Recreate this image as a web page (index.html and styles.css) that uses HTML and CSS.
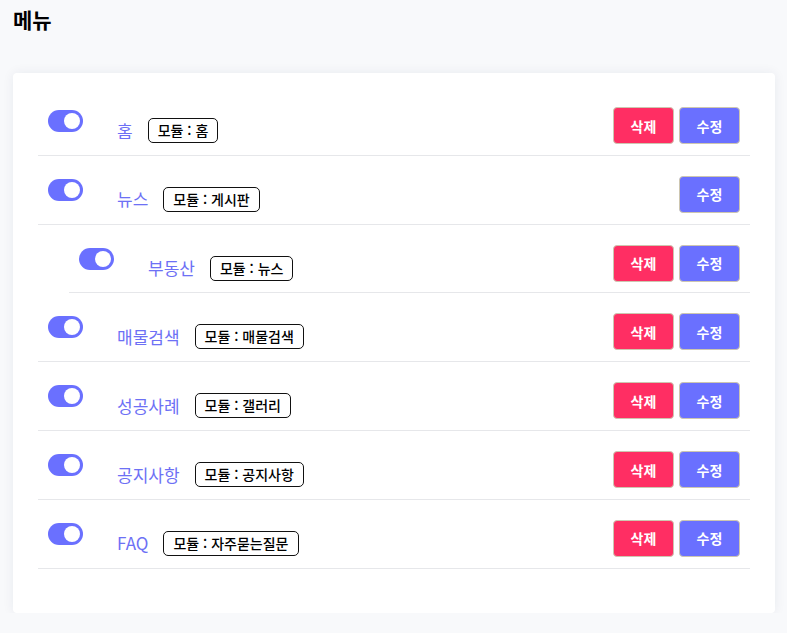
FILE: index.html
```html
<!DOCTYPE html>
<html lang="ko">
<head>
<meta charset="utf-8">
<title>메뉴</title>
<link rel="stylesheet" href="styles.css">
</head>
<body>
<div class="page">
  <h1 class="title">메뉴</h1>
  <div class="card">
    <div class="row">
      <div class="left">
        <span class="switch"><span class="knob"></span></span>
        <div class="name"><span class="label">홈</span><span class="badge">모듈 : 홈</span></div>
      </div>
      <div class="actions"><button class="btn del">삭제</button><button class="btn edit">수정</button></div>
    </div>
    <div class="row">
      <div class="left">
        <span class="switch"><span class="knob"></span></span>
        <div class="name"><span class="label">뉴스</span><span class="badge">모듈 : 게시판</span></div>
      </div>
      <div class="actions"><button class="btn edit">수정</button></div>
    </div>
    <div class="row sub">
      <div class="left">
        <span class="switch"><span class="knob"></span></span>
        <div class="name"><span class="label">부동산</span><span class="badge">모듈 : 뉴스</span></div>
      </div>
      <div class="actions"><button class="btn del">삭제</button><button class="btn edit">수정</button></div>
    </div>
    <div class="row">
      <div class="left">
        <span class="switch"><span class="knob"></span></span>
        <div class="name"><span class="label">매물검색</span><span class="badge">모듈 : 매물검색</span></div>
      </div>
      <div class="actions"><button class="btn del">삭제</button><button class="btn edit">수정</button></div>
    </div>
    <div class="row">
      <div class="left">
        <span class="switch"><span class="knob"></span></span>
        <div class="name"><span class="label">성공사례</span><span class="badge">모듈 : 갤러리</span></div>
      </div>
      <div class="actions"><button class="btn del">삭제</button><button class="btn edit">수정</button></div>
    </div>
    <div class="row">
      <div class="left">
        <span class="switch"><span class="knob"></span></span>
        <div class="name"><span class="label">공지사항</span><span class="badge">모듈 : 공지사항</span></div>
      </div>
      <div class="actions"><button class="btn del">삭제</button><button class="btn edit">수정</button></div>
    </div>
    <div class="row">
      <div class="left">
        <span class="switch"><span class="knob"></span></span>
        <div class="name"><span class="label">FAQ</span><span class="badge">모듈 : 자주묻는질문</span></div>
      </div>
      <div class="actions"><button class="btn del">삭제</button><button class="btn edit">수정</button></div>
    </div>
  </div>
</div>
</body>
</html>
```
FILE: styles.css
```css
html, body {
  margin: 0;
  padding: 0;
  background: #f8f9fb;
  font-family: "Noto Sans CJK KR", "Noto Sans", sans-serif;
  color: #000;
}
.page {
  padding: 7px 12px 0 13px;
}
.title {
  margin: 0;
  font-size: 21px;
  line-height: 24px;
  font-weight: 700;
}
.card {
  margin-top: 42px;
  background: #fff;
  border-radius: 4px;
  box-shadow: 0 0 12px rgba(30, 40, 80, 0.07);
  padding: 14px 25px 44px 25px;
}
.row {
  display: flex;
  justify-content: space-between;
  align-items: flex-start;
  padding: 20px 10px 11px 10px;
  border-bottom: 1px solid #e6e7ea;
  height: 36.83px;
}
.row.sub {
  margin-left: 31px;
}
.left {
  display: flex;
  align-items: flex-start;
}
.switch {
  display: block;
  width: 35px;
  height: 22px;
  margin-top: 3px;
  border-radius: 11px;
  background: #6a70ff;
  position: relative;
}
.knob {
  position: absolute;
  top: 3px;
  right: 3px;
  width: 16px;
  height: 16px;
  border-radius: 50%;
  background: #fff;
}
.name {
  display: flex;
  align-items: center;
  margin-left: 34px;
  margin-top: 11px;
  height: 25px;
}
.label {
  font-size: 17px;
  color: #6d70f5;
  line-height: 20px;
}
.badge {
  margin-left: 15px;
  height: 23px;
  padding: 0 9px;
  border: 1px solid #111;
  border-radius: 5px;
  font-size: 14px;
  font-weight: 500;
  line-height: 23px;
}
.actions {
  display: flex;
  gap: 5px;
}
.btn {
  width: 61px;
  height: 37px;
  border: 1px solid #cdc6b0;
  border-radius: 4px;
  color: #fff;
  font-family: "Noto Sans CJK KR", "Noto Sans", sans-serif;
  font-size: 14px;
  font-weight: 700;
  padding: 0;
  cursor: pointer;
}
.btn.del {
  background: #ff2e63;
}
.btn.edit {
  background: #6a70ff;
}
```
